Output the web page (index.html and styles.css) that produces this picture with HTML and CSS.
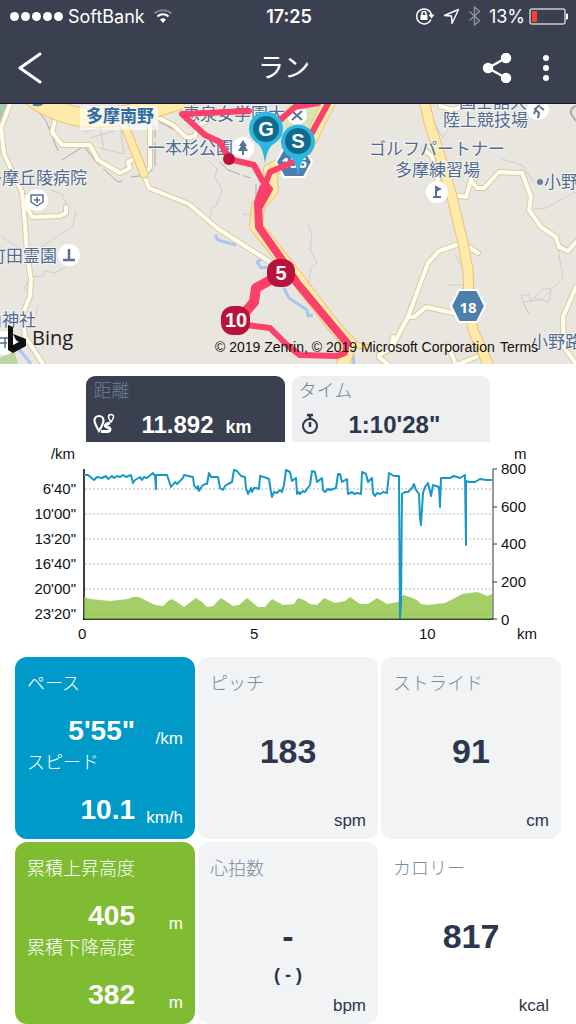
FILE: index.html
```html
<!DOCTYPE html>
<html lang="ja">
<head>
    <meta charset="UTF-8">
    <meta name="viewport" content="width=device-width, initial-scale=1.0">
    <title>ラン</title>
    <link rel="stylesheet" href="styles.css">
</head>
<body>
    <header class="top">
        <div class="status">
            <div class="status-left">
                <span class="dots"><i></i><i></i><i></i><i></i><i></i></span>
                <span class="carrier">SoftBank</span>
                <svg width="20" height="16" viewBox="0 0 20 16" fill="none" stroke="#fff" stroke-width="2">
                    <path d="M1.500 5.500a12.500 12.500 0 0 1 17 0" stroke="#7b808b"/>
                    <path d="M4.500 8.500a8 8 0 0 1 11 0"/>
                    <path d="M7 11.500a4.500 4.500 0 0 1 6 0L10 15z" fill="#fff" stroke="none"/>
                </svg>
            </div>
            <span class="clock">17:25</span>
            <div class="status-right">
                <svg width="20" height="18" viewBox="0 0 20 18" fill="none" stroke="#fff" stroke-width="1.500">
                    <path d="M16 12.500A7.500 7.500 0 1 1 16.500 8"/>
                    <path d="M13.500 7.500h6l-3 4z" fill="#fff" stroke="none"/>
                    <rect x="5.500" y="8" width="7" height="5" fill="#fff" stroke="none"/>
                    <path d="M7 8V6.500a2 2 0 0 1 4 0V8"/>
                </svg>
                <svg width="17" height="17" viewBox="0 0 17 17" fill="none" stroke="#fff" stroke-width="1.400" stroke-linejoin="round">
                    <path d="M15.500 1.500L1.500 7.500l7 .5.5 7.500z"/>
                </svg>
                <svg width="13" height="20" viewBox="0 0 13 20" fill="none" stroke="#8b909a" stroke-width="1.500">
                    <path d="M1.500 5.500l10 9-5 4.500V1l5 4.500-10 9"/>
                </svg>
                <span class="percent">13%</span>
                <svg width="39" height="17" viewBox="0 0 39 17">
                    <rect x="1" y="1" width="35" height="15" rx="2" fill="none" stroke="#c8cbd0" stroke-width="1.500"/>
                    <rect x="3" y="3" width="5" height="11" fill="#ff3b30"/>
                    <path d="M37 5.500a3 3 0 0 1 0 6z" fill="#fff"/>
                </svg>
            </div>
        </div>
        <nav class="bar">
            <button class="icon-btn" aria-label="戻る">
                <svg width="24" height="34" viewBox="0 0 24 34" fill="none" stroke="#fff" stroke-width="3" stroke-linecap="round" stroke-linejoin="round"><path d="M22 3L2 17l20 14"/></svg>
            </button>
            <h1>ラン</h1>
            <div class="actions">
                <button class="icon-btn" aria-label="共有">
                    <svg width="30" height="30" viewBox="0 0 30 30" fill="#fff" stroke="#fff" stroke-width="2.500">
                        <path d="M24 5L6 15l18 10" fill="none"/>
                        <circle cx="24" cy="5" r="4"/><circle cx="6" cy="15" r="4"/><circle cx="24" cy="25" r="4"/>
                    </svg>
                </button>
                <button class="icon-btn" aria-label="メニュー">
                    <svg width="8" height="28" viewBox="0 0 8 28" fill="#fff"><circle cx="4" cy="4" r="3"/><circle cx="4" cy="14" r="3"/><circle cx="4" cy="24" r="3"/></svg>
                </button>
            </div>
        </nav>
    </header>

    <main>
        <svg class="map" viewBox="0 0 576 260">
            <rect width="576" height="260" fill="#e9e5df"/>
            <path d="M0 0h13L0 20z" fill="#a8cab1"/>
            <path d="M0 254l14-8 4 14H0z" fill="#bed59e"/>
            <path d="M276 18l14-18h32l-10 18-16 12z" fill="#d9e3b7"/>

            <!-- footpaths and tracks -->
            <g class="paths">
                <path d="M84 28l36-8 4 30-24-6M90 34l24-7M100 24l4 20M50 86l12 4 4 10M76 107l-3 15-18 12-17 11M2 133l34 22M30 190l-6-6 8-12 10 1 3-6 10 2 10-6M38 202l-3 14"/>
                <path d="M209 57l8 8-2 8 7 13-6 16-4 2-2 12M244 112v-2h7v6M308 120l4 10-2 16 7 12-6 6-3 20"/>
                <path d="M502 55l20 6 12 18M534 105l12-1 14-8 16-8M558 145l5 29-22 22-18 2 6 12-6-12-2-6 8-2 2 8 10-12 10-2-2 14-14-4M447 181h16M455 150l6 12M430 8l6 14 7 12 6-10"/>
            </g>
            <g class="tracks">
                <path d="M38 7l8 10 12 30M62 56l22-14 12 16 22 20 8-2M131 73l16-2 8-8V22M159 18l16 8M220 58l8 8 22 8M256 80v14"/>
            </g>
            <g class="water">
                <path d="M215 131l3 5 18 5M262 155l-5 3 4 6 7-1M284 184l5 10 18 12 1 6 5-1M352 242l2 18M15 240l16 20"/>
            </g>

            <!-- minor roads -->
            <g class="road-case">
                <path d="M10 0L1 24l3 26 18 38 3 32 2 30 4 25-1 17-8 20 3 20 18 28"/>
                <path d="M55 16l-3 12 10 13h28l8 15 22 13 10-5-2-6 8-4M150 21v42l-6 8 5 13 40 16 28 24 53 34"/>
                <path d="M157 13l16 8 14 13 8-2 3-10 14-8M27 92v11l5 10 28-1 6-3v-6"/>
                <path d="M424 46l8 6 6 24M454 91l12 2 5-17 6 8h7l15-16 23 1 9 24-2 13 12 17 15 10 3 10 9 4 8-9"/>
                <path d="M459 140l-20 7-11 12-20 54-17 32 2-12M478 149l-15-10M408 213h6l12-10 27 6M379 251l12-6M379 253l12 10M576 183l-13 30 1 30 12 17M448 241l8 20 30-12M440 2l12 4 12-4"/>
            </g>
            <g class="road-fill">
                <path d="M10 0L1 24l3 26 18 38 3 32 2 30 4 25-1 17-8 20 3 20 18 28"/>
                <path d="M55 16l-3 12 10 13h28l8 15 22 13 10-5-2-6 8-4M150 21v42l-6 8 5 13 40 16 28 24 53 34"/>
                <path d="M157 13l16 8 14 13 8-2 3-10 14-8M27 92v11l5 10 28-1 6-3v-6"/>
                <path d="M424 46l8 6 6 24M454 91l12 2 5-17 6 8h7l15-16 23 1 9 24-2 13 12 17 15 10 3 10 9 4 8-9"/>
                <path d="M459 140l-20 7-11 12-20 54-17 32 2-12M478 149l-15-10M408 213h6l12-10 27 6M379 251l12-6M379 253l12 10M576 183l-13 30 1 30 12 17M448 241l8 20 30-12M440 2l12 4 12-4"/>
            </g>

            <!-- main roads -->
            <g class="main-case">
                <path d="M28-10Q60 14 95 14T190-8" stroke-width="20"/>
                <path d="M124 20l20 50" stroke-width="9"/>
                <path d="M424-4l5 22 10 30 12 41 12 50 5 27 1 30 4 30 16 36" stroke-width="11"/>
                <path d="M330-4l-28 56M302 52l-32 14 2 20-14 16-2 20 24 30 52 68 18 20-12 34" stroke-width="14"/>
                <path d="M346 238l20 5" stroke-width="6"/>
            </g>
            <g class="main-fill">
                <path d="M28-10Q60 14 95 14T190-8" stroke-width="18"/>
                <path d="M124 20l20 50" stroke-width="7"/>
                <path d="M424-4l5 22 10 30 12 41 12 50 5 27 1 30 4 30 16 36" stroke-width="9"/>
                <path d="M330-4l-28 56M302 52l-32 14 2 20-14 16-2 20 24 30 52 68 18 20-12 34" stroke-width="12"/>
                <path d="M346 238l20 5" stroke-width="4"/>
            </g>

            <rect x="80" y="2" width="78" height="24" fill="#fff" fill-opacity=".6"/>
            <path d="M33 0q8 2 10-2" stroke="#4b7fab" stroke-width="3" fill="none"/>

            <!-- place markers -->
            <g fill="#fff">
                <circle cx="37" cy="96" r="11"/><circle cx="69" cy="151" r="11"/><circle cx="4" cy="239" r="12"/>
                <circle cx="243" cy="44" r="11"/><circle cx="297" cy="11" r="10"/><circle cx="437" cy="88" r="11"/><circle cx="538" cy="5" r="11"/>
            </g>
            <g fill="none" stroke="#5a7190" stroke-width="1.500">
                <path d="M31 91h12v7l-6 4-6-4zM37 93v6M34 96h6"/>
                <path d="M63 156h12M69 156v-11" stroke-width="2.500"/>
                <path d="M0 234h8M0 239h7M5 234v10"/>
                <path d="M292 7l10 9M302 7l-10 9" stroke-width="2"/>
                <path d="M433 93h8M436 93V82" stroke-width="2"/>
                <path d="M540 1l-5 4 4 4-1 5M536 5l-2 5M540 3l4 3" stroke-width="2"/>
            </g>
            <path d="M243 36l4 6h-2l3 5h-4v4h-2v-4h-4l3-5h-2zM436 82l6 3-6 3z" fill="#5a7190"/>
            <path d="M576 2q-6 2-5 8l5 7" fill="none" stroke="#aaa" stroke-width="2"/>
            <circle cx="540" cy="78" r="3" fill="#6b80a0"/>

            <g class="place">
                <text x="87" y="80" text-anchor="end">多摩丘陵病院</text>
                <text x="57" y="158" text-anchor="end">町田霊園</text>
                <text x="36" y="222" text-anchor="end">山神社</text>
                <text x="148" y="50">一本杉公園</text>
                <text x="183" y="16">恵泉女学園大</text>
                <text x="459" y="4">国士舘大</text>
                <text x="443" y="22">陸上競技場</text>
                <text x="369" y="51">ゴルフパートナー</text>
                <text x="395" y="72">多摩練習場</text>
                <text x="544" y="84">小野路</text>
                <text x="531" y="244">小野路町</text>
            </g>
            <text class="place station" x="86" y="18">多摩南野</text>

            <g class="shield">
                <path d="M284 44h20l8 14-8 15h-20l-8-15z"/>
                <text x="294" y="64">156</text>
                <path d="M459 186h18l8 16-8 16h-18l-8-16z"/>
                <text x="468" y="209">18</text>
            </g>

            <!-- run track -->
            <g class="track">
                <path d="M249 7l-67 3 23 21 15 7 9 17 25 6 8 15 8 9-10 18"/>
                <path d="M293 58l-23 10-7 18M330-4l-21 38M318-1l-23 4-15 13"/>
                <path d="M263 84l-5 15 1 24 21 30 17 26 50 60" stroke-width="8"/>
                <path d="M347 239l-2 10-8 3-37-1-13-10-17-17-23-3"/>
                <path d="M274 174l-18 10-2 14-12 14" stroke-width="10"/>
            </g>
            <circle cx="229" cy="55" r="6" fill="#b8143b"/>
            <g class="km">
                <rect x="267" y="155" width="28" height="28" rx="12"/><text x="281" y="176">5</text>
                <rect x="221" y="202" width="29" height="29" rx="12"/><text x="236" y="223">10</text>
            </g>
            <g class="pin">
                <path d="M298 72q-2-16-9-20a17 17 0 1 1 18 0q-7 4-9 20z"/><circle cx="298" cy="37" r="13"/><text x="298" y="44">S</text>
                <path d="M265 59q-2-16-8-20a17 17 0 1 1 18 0q-8 4-10 20z"/><circle cx="266" cy="25" r="13"/><text x="266" y="32">G</text>
            </g>

            <path d="M8 221l5 2v18l6-3-3-2-3-6 13 5v7l-13 7-5-3z" fill="#111"/>
            <text class="bing" x="32" y="241">Bing</text>
            <text class="credit" x="215" y="248">© 2019 Zenrin, © 2019 Microsoft Corporation</text>
            <a href="#terms"><text class="credit" x="500" y="248">Terms</text></a>
        </svg>

        <div class="tabs">
            <button class="tab active">
                <span class="tab-label">距離</span>
                <span class="tab-row">
                    <svg class="tab-icon" width="22" height="22" viewBox="0 0 22 22" fill="none" stroke="#fff" stroke-width="2.200">
                        <path d="M6 18C3 13 1.500 10.500 1.500 7.500a4.500 4.500 0 0 1 9 0C10.500 10.500 9 13 6 18z"/>
                        <path d="M18 9c-2-3-2.500-4-2.500-5a2.500 2.500 0 0 1 5 0c0 1-.5 2-2.500 5z" stroke-width="1.500"/>
                        <path d="M17 10c-5 1-6 3-3 4 4 1 4 4 0 4.500H8" stroke-width="3"/>
                    </svg>
                    <span class="tab-value">11.892</span><span class="tab-unit">km</span>
                </span>
            </button>
            <button class="tab">
                <span class="tab-label">タイム</span>
                <span class="tab-row">
                    <svg class="tab-icon" width="22" height="22" viewBox="0 0 22 22" fill="none" stroke="#2c364c" stroke-width="2">
                        <circle cx="9" cy="13" r="7"/><path d="M9 9v5M6 2h6M9 3v3" stroke-width="2.500"/>
                    </svg>
                    <span class="tab-value">1:10'28"</span>
                </span>
            </button>
        </div>

        <svg class="chart" viewBox="0 0 576 212">
            <g class="grid">
                <path d="M85 47h407M85 72h407M85 97h407M85 122h407M85 147h407M85 172h407"/>
            </g>
            <path d="M84 27v151M83 177h410" stroke="#000" stroke-width="1.500"/>
            <path d="M497 27h-4v150h4M493 65h4M493 102h4M493 140h4" fill="none" stroke="#333"/>
            <path class="elevation" d="M84 177V155l6 2 20 2 18-2 5-2h6l8 4 8 4 8 1 5-5 4-2 5 3 7 5 8-6 4-3 6 4 5 5 6-1 8-8 12 8 6-1 8-7 11 9h7l7-8 11 6 11-1 4-6 6 2 6 4 7 1 7-7 11 5 10-2 5-4 10 7 8 0 9-6 10 6 11-2 5-7 7 2 7 3 4 4 7 1 17-2 8-4 9-5 15-2 6 2 4 2 5-2V177z"/>
            <polyline class="pace" points="84,33 88,33 94,38 97,35 102,36 106,34 108,37 112,34 114,36 117,34 120,35 123,33 126,35 131,33 133,41 135,38 140,35 142,38 144,35 147,36 153,31 155,34 156,47 156,33 167,33 171,45 175,40 177,42 183,36 184,33 193,35 194,43 197,47 198,44 199,49 202,44 205,42 207,42 209,31 211,35 218,35 220,46 223,48 225,44 228,42 232,40 234,28 237,29 241,34 245,35 246,46 248,52 251,46 252,50 254,46 256,46 259,47 260,34 264,35 269,37 271,50 272,55 274,50 277,51 280,48 282,50 284,43 286,28 290,30 292,39 296,36 297,52 299,50 300,52 303,49 305,50 307,47 310,43 312,29 315,30 317,40 322,36 323,48 325,50 328,47 330,48 336,46 338,32 340,32 342,40 347,37 348,52 352,50 354,52 357,51 361,52 362,30 366,32 368,40 372,36 373,51 375,54 377,51 380,52 383,50 387,51 389,31 394,34 399,34 400,176 401,161 402,52 405,50 408,50 412,46 414,42 416,48 419,52 420,76 421,83 423,51 425,45 428,41 431,54 433,43 439,45 440,65 441,36 450,36 454,34 460,36 465,33 466,103 466,39 469,40 475,40 480,37 486,38 492,38"/>
            <g class="axis">
                <text x="63" y="17" text-anchor="middle">/km</text>
                <g text-anchor="end">
                    <text x="76" y="52">6'40"</text><text x="76" y="77">10'00"</text><text x="76" y="102">13'20"</text>
                    <text x="76" y="127">16'40"</text><text x="76" y="152">20'00"</text><text x="76" y="177">23'20"</text>
                </g>
                <text x="514" y="17">m</text>
                <text x="501" y="32">800</text><text x="501" y="70">600</text><text x="501" y="107">400</text>
                <text x="501" y="145">200</text><text x="501" y="183">0</text>
                <text x="78" y="197">0</text><text x="250" y="197">5</text><text x="419" y="197">10</text><text x="517" y="197">km</text>
            </g>
        </svg>

        <section class="stats">
            <div class="card blue">
                <div class="metric"><h2>ペース</h2><p><b>5'55"</b><span>/km</span></p></div>
                <div class="metric"><h2>スピード</h2><p><b>10.1</b><span>km/h</span></p></div>
            </div>
            <div class="card">
                <h2>ピッチ</h2>
                <div class="big">183</div>
                <span class="unit">spm</span>
            </div>
            <div class="card">
                <h2>ストライド</h2>
                <div class="big">91</div>
                <span class="unit">cm</span>
            </div>
            <div class="card green">
                <div class="metric"><h2>累積上昇高度</h2><p><b>405</b><span>m</span></p></div>
                <div class="metric"><h2>累積下降高度</h2><p><b>382</b><span>m</span></p></div>
            </div>
            <div class="card">
                <h2>心拍数</h2>
                <div class="big">-<small>( - )</small></div>
                <span class="unit">bpm</span>
            </div>
            <div class="card plain">
                <h2>カロリー</h2>
                <div class="big">817</div>
                <span class="unit">kcal</span>
            </div>
        </section>
    </main>
</body>
</html>
```

FILE: styles.css
```css
* {
    box-sizing: border-box;
}
body {
    margin: 0;
    background: #fff;
    color: #2c364c;
    font-family: "Liberation Sans", "Noto Sans CJK JP", sans-serif;
}
h1, h2, p {
    margin: 0;
    font-weight: 300;
}
button {
    padding: 0;
    border: none;
    background: none;
    color: inherit;
    font-family: inherit;
    text-align: left;
    cursor: pointer;
}
svg {
    display: block;
}

/* header */
.top {
    background: #3a404f;
    color: #fff;
    border-bottom: 1px solid #14163a;
}
.status {
    display: grid;
    grid-template-columns: 1fr auto 1fr;
    align-items: center;
    height: 32px;
    padding: 0 8px 0 10px;
    font-family: Inter, "Liberation Sans", sans-serif;
    font-size: 18px;
}
.status-left, .status-right {
    display: flex;
    align-items: center;
    gap: 8px;
}
.status-right {
    justify-content: flex-end;
}
.dots {
    display: flex;
    gap: 2px;
    margin-right: -3px;
}
.dots i {
    width: 9px;
    height: 9px;
    border-radius: 50%;
    background: #fff;
}
.clock {
    font-weight: 600;
}
.percent {
    margin-right: -4px;
}
.bar {
    display: grid;
    grid-template-columns: 1fr auto 1fr;
    align-items: center;
    height: 71px;
    padding: 0 26px 0 18px;
}
.bar h1 {
    font-size: 26px;
    font-weight: 400;
    line-height: 40px;
}
.icon-btn {
    justify-self: start;
}
.actions {
    display: flex;
    justify-content: flex-end;
    align-items: center;
    gap: 30px;
}

/* map */
.map, .chart {
    width: 100%;
    height: auto;
}
.map path {
    stroke-linejoin: round;
}
.paths {
    fill: none;
    stroke: #cfcdca;
}
.tracks {
    fill: none;
    stroke: #a9a9a9;
    stroke-width: 1;
    stroke-dasharray: 24 4;
}
.water {
    fill: none;
    stroke: #a9c5f2;
    stroke-width: 3;
}
.road-case, .road-fill, .main-case, .main-fill {
    fill: none;
    stroke-linecap: round;
}
.road-case {
    stroke: #dccb98;
    stroke-width: 6;
}
.road-fill {
    stroke: #fffdf3;
    stroke-width: 4;
}
.main-case {
    stroke: #f0c078;
}
.main-fill {
    stroke: #feeba9;
}
.place {
    fill: #4f6b92;
    stroke: #f6f4f0;
    stroke-width: 2px;
    paint-order: stroke;
    font-family: "Noto Sans CJK JP", sans-serif;
    font-size: 17px;
}
.station {
    fill: #2f6ca0;
    font-weight: 700;
}
.shield {
    fill: #4c7fac;
    stroke: #fff;
    stroke-width: 2px;
}
.shield text {
    fill: #fff;
    stroke: none;
    font-family: "Open Sans", sans-serif;
    font-size: 15px;
    font-weight: 700;
    text-anchor: middle;
}
.track {
    fill: none;
    stroke: #fb4069;
    stroke-width: 6;
    stroke-linecap: round;
}
.km {
    fill: #b8143b;
}
.km text, .pin text {
    fill: #fff;
    font-size: 20px;
    font-weight: 700;
    text-anchor: middle;
}
.pin path {
    fill: #2bb8e0;
}
.pin circle {
    fill: #126b8f;
}
.bing {
    fill: #222;
    font-family: "Open Sans", sans-serif;
    font-size: 20px;
}
.credit {
    fill: #111;
    font-size: 14px;
}

/* tabs */
.tabs {
    display: flex;
    gap: 7px;
    width: 70%;
    margin: 12px auto 0;
}
.tab {
    flex: 1;
    height: 66px;
    padding: 0 7px;
    border-radius: 9px 9px 0 0;
    background: #eeeff1;
}
.tab.active {
    background: #3a404f;
    color: #fff;
}
.tab-label {
    display: block;
    font-size: 18px;
    font-weight: 300;
    line-height: 30px;
    color: #6b8294;
}
.tab-row {
    display: flex;
    align-items: baseline;
    height: 36px;
    line-height: 38px;
}
.tab-icon {
    align-self: center;
    margin-right: 26px;
}
.tab + .tab .tab-icon {
    margin-left: 2px;
}
.tab-value {
    font-size: 24px;
    font-weight: 700;
}
.tab-unit {
    margin-left: 12px;
    font-size: 18px;
    font-weight: 700;
}

/* chart */
.grid {
    fill: none;
    stroke: #b5b5b5;
    stroke-dasharray: 2 2;
}
.elevation {
    fill: #86bf36;
    fill-opacity: .75;
}
.pace {
    fill: none;
    stroke: #1898c6;
    stroke-width: 2;
    stroke-linejoin: round;
}
.axis {
    fill: #111;
    font-size: 15px;
}

/* stats */
.stats {
    display: grid;
    grid-template-columns: repeat(3, 1fr);
    gap: 3px;
    padding: 3px 15px 0;
}
.card {
    display: flex;
    flex-direction: column;
    height: 182px;
    padding: 15px 12px 12px;
    border-radius: 12px;
    background: #f2f3f5;
}
.card h2 {
    font-size: 18px;
    line-height: 24px;
    color: #768b9d;
}
.card.blue {
    background: #009ac9;
}
.card.green {
    background: #80bc32;
}
.card.plain {
    background: #fff;
}
.blue, .green, .card.blue h2, .card.green h2 {
    color: #fff;
}
.metric {
    display: flex;
    flex: none;
    flex-direction: column;
    justify-content: space-between;
    height: 79px;
}
.metric p {
    display: grid;
    grid-template-columns: 1fr 48px;
    align-items: end;
    text-align: right;
}
.metric b {
    font-size: 28px;
    font-weight: 700;
    line-height: 40px;
}
.metric span {
    font-size: 17px;
    font-weight: 400;
    line-height: 24px;
}
.big {
    flex: 1;
    padding-top: 32px;
    font-size: 34px;
    font-weight: 700;
    line-height: 46px;
    text-align: center;
}
.big small {
    display: block;
    font-size: 18px;
    line-height: 32px;
}
.unit {
    align-self: flex-end;
    font-size: 17px;
    line-height: 12px;
}
```
